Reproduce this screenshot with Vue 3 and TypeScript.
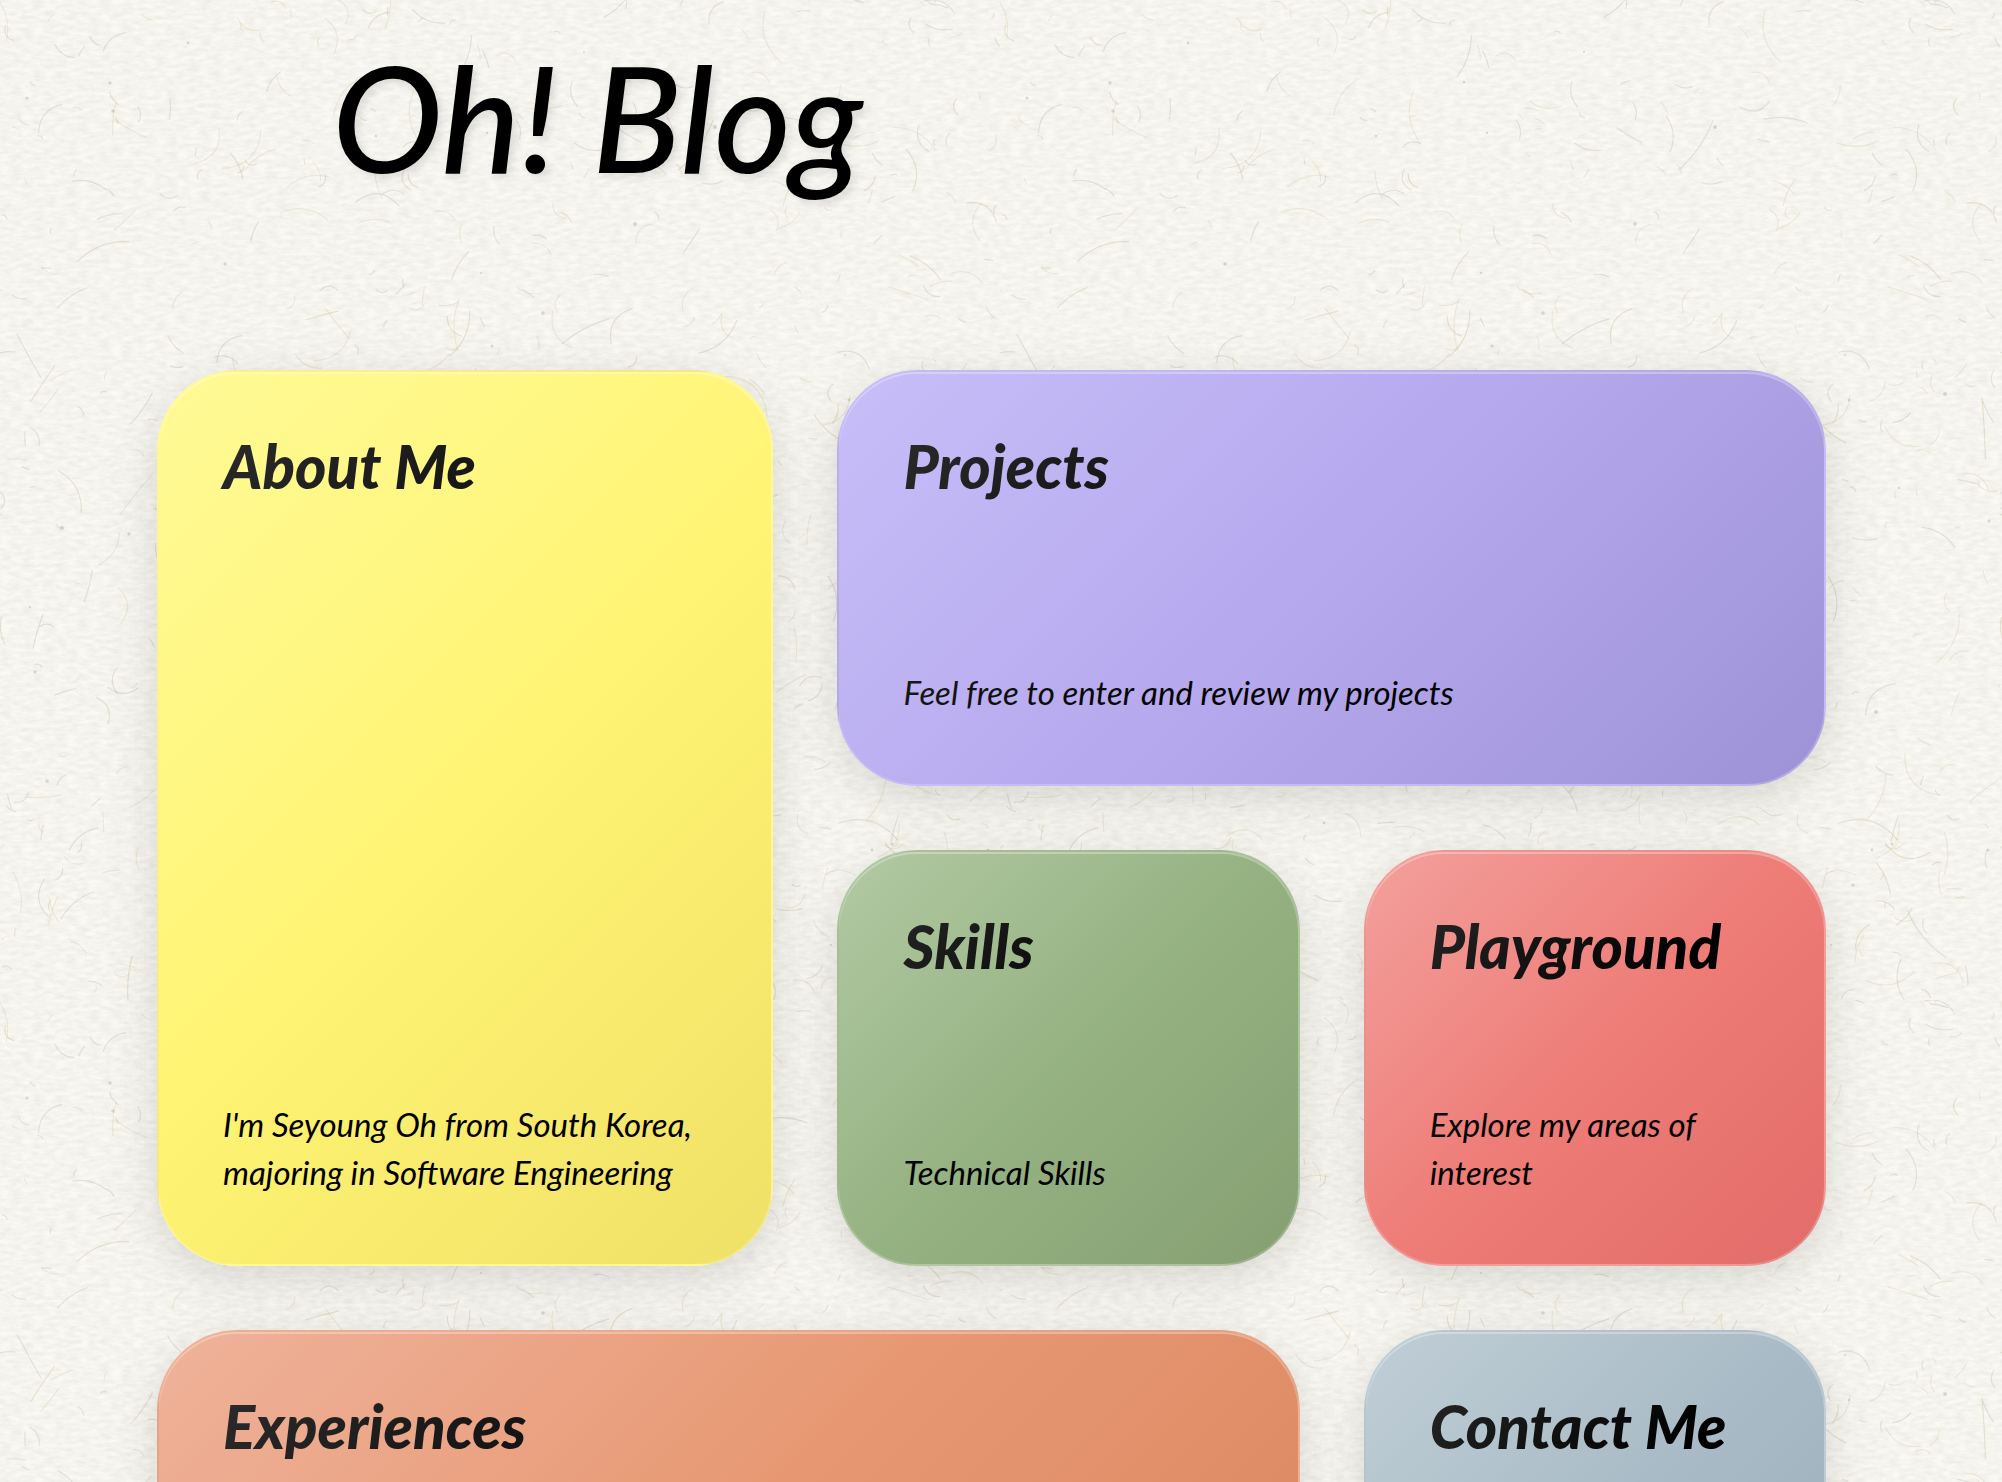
<script setup lang="ts">
interface Card {
  id: string
  title: string
  text: string
}

interface Fibre {
  d: string
  tone: string
}

const cards: Card[] = [
  { id: 'about', title: 'About Me', text: "I'm Seyoung Oh from South Korea, majoring in Software Engineering" },
  { id: 'projects', title: 'Projects', text: 'Feel free to enter and review my projects' },
  { id: 'skills', title: 'Skills', text: 'Technical Skills' },
  { id: 'playground', title: 'Playground', text: 'Explore my areas of interest' },
  { id: 'experiences', title: 'Experiences', text: '' },
  { id: 'contact', title: 'Contact Me', text: '' },
]

// Seeded generator, so that the paper keeps the same fibres on every load
let seed = 7
const random = (): number => {
  seed = (seed * 16807) % 2147483647
  return seed / 2147483647
}

const tones = ['#b9a77c', '#d3c08f', '#a9a9a4', '#cfc29a']
const tileSize = 1000

const fibres: Fibre[] = Array.from({ length: 700 }, () => {
  const x = random() * tileSize
  const y = random() * tileSize
  const angle = random() * Math.PI * 2
  const length = 6 + random() * random() * 60
  const bend = (random() - 0.5) * length
  const dx = Math.cos(angle) * length
  const dy = Math.sin(angle) * length
  const cx = dx / 2 - Math.sin(angle) * bend
  const cy = dy / 2 + Math.cos(angle) * bend
  const r = (n: number) => Math.round(n * 10) / 10
  return {
    d: `M${r(x)} ${r(y)}q${r(cx)} ${r(cy)} ${r(dx)} ${r(dy)}`,
    tone: tones[Math.floor(random() * tones.length)],
  }
})

const specks = Array.from({ length: 40 }, () => ({
  x: Math.round(random() * tileSize),
  y: Math.round(random() * tileSize),
  r: 1 + random(),
}))
</script>

<template>
  <div class="page">
    <svg class="paper" aria-hidden="true">
      <defs>
        <filter id="grain" x="0" y="0" width="100%" height="100%" color-interpolation-filters="sRGB">
          <feTurbulence type="fractalNoise" baseFrequency="0.09 0.25" numOctaves="4" seed="4" />
          <feColorMatrix values="0 0 0 0 0.5  0 0 0 0 0.46  0 0 0 0 0.34  0.16 0 0 0 -0.04" />
        </filter>
        <pattern id="fibres" :width="tileSize" :height="tileSize" patternUnits="userSpaceOnUse">
          <path v-for="(f, i) in fibres" :key="i" :d="f.d" :stroke="f.tone" fill="none" stroke-width="1.2" opacity="0.28" />
          <circle v-for="(s, i) in specks" :key="'s' + i" :cx="s.x" :cy="s.y" :r="s.r" fill="#8d8b88" opacity="0.3" />
        </pattern>
      </defs>
      <rect width="100%" height="100%" filter="url(#grain)" />
      <rect width="100%" height="100%" fill="url(#fibres)" />
    </svg>

    <header class="header">
      <h1 class="title">Oh! Blog</h1>
    </header>

    <main class="grid">
      <a v-for="card in cards" :key="card.id" class="card" :class="card.id" :href="'#' + card.id">
        <h2 class="card-title">{{ card.title }}</h2>
        <p v-if="card.text" class="card-text">{{ card.text }}</p>
      </a>
    </main>
  </div>
</template>

<style>
body {
  background: #faf9f4;
}
</style>

<style scoped>
.page {
  position: relative;
  overflow: hidden;
  font-family: Lato, 'Noto Sans', sans-serif;
  font-style: italic;
  color: #000;
}

.paper {
  position: absolute;
  inset: 0;
  z-index: -1;
  width: 100%;
  height: 100%;
}

.header {
  padding: 20px 332px 158px;
}

.title {
  margin: 0;
  font-size: 148px;
  font-weight: 500;
  line-height: 192px;
  text-shadow: 4px 4px 8px rgba(0, 0, 0, 0.1);
}

.grid {
  display: grid;
  grid-template-columns: 4fr 3fr 3fr;
  grid-auto-rows: minmax(416px, auto);
  gap: 64px;
  padding: 0 176px 64px 157px;
}

.card {
  position: relative;
  display: flex;
  flex-direction: column;
  justify-content: space-between;
  box-sizing: border-box;
  min-width: 0;
  padding: 54px 64px 68px;
  border: 2px solid rgba(255, 255, 255, 0.2);
  border-radius: 80px;
  background: linear-gradient(135deg, var(--light) 0%, var(--base) 50%, var(--dark) 100%);
  color: inherit;
  text-decoration: none;
  box-shadow:
    0 16px 64px rgba(0, 0, 0, 0.08),
    0 8px 32px rgba(0, 0, 0, 0.06),
    inset 0 2px 0 rgba(255, 255, 255, 0.3);
}

.card::before {
  content: '';
  position: absolute;
  inset: 0;
  border-radius: 78px;
  background: linear-gradient(135deg, rgba(255, 255, 255, 0.2) 0%, rgba(255, 255, 255, 0) 50%);
  pointer-events: none;
}

.about {
  --light: #fff97c;
  --base: #fff473;
  --dark: #efe067;
  grid-row: span 2;
}

.projects {
  --light: #baaef6;
  --base: #b5a8ed;
  --dark: #9e92d6;
  grid-column: span 2;
}

.skills {
  --light: #9fbb8b;
  --base: #95b282;
  --dark: #869f72;
}

.playground {
  --light: #f08883;
  --base: #ee7c77;
  --dark: #e26c69;
}

.experiences {
  --light: #eb9f81;
  --base: #e79872;
  --dark: #d98660;
  grid-column: span 2;
}

.contact {
  --light: #b0c2cc;
  --base: #a9bbc6;
  --dark: #9aabb8;
}

.card-title {
  margin: 0;
  font-size: 60px;
  font-weight: 900;
  line-height: 80px;
}

.card-text {
  margin: 0;
  font-size: 33px;
  line-height: 48px;
}
</style>
